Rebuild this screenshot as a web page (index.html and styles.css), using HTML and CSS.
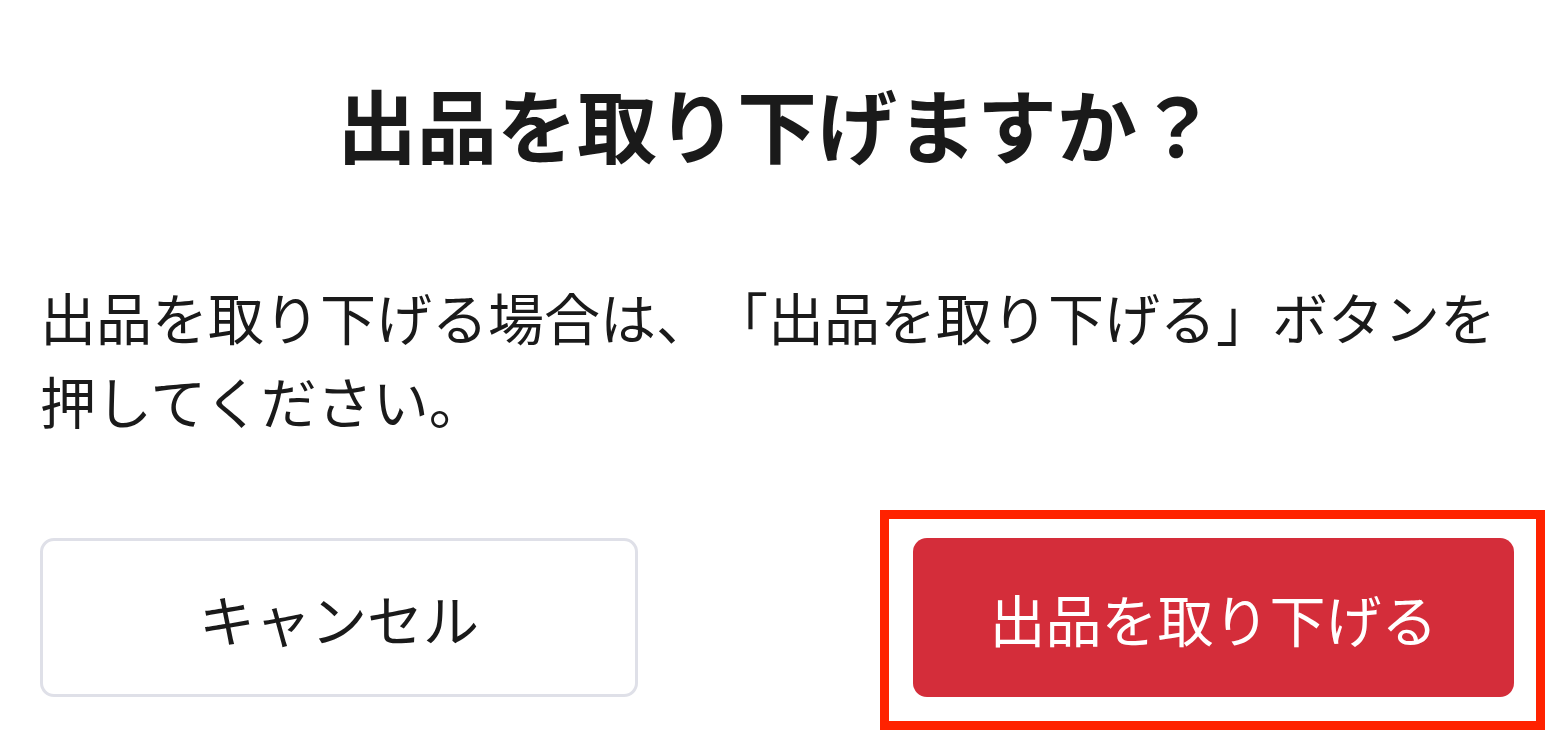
FILE: index.html
```html
<!DOCTYPE html>
<html lang="ja">
<head>
    <meta charset="UTF-8">
    <meta name="viewport" content="width=device-width, initial-scale=1.0">
    <title>出品を取り下げますか？</title>
    <link rel="stylesheet" href="styles.css">
</head>
<body>
    <div class="dialog">
        <h1 class="dialog-title">出品を取り下げますか？</h1>
        <p class="dialog-text">出品を取り下げる場合は、「出品を取り下げる」ボタンを押してください。</p>
        <div class="dialog-actions">
            <button class="btn btn-cancel">キャンセル</button>
            <div class="btn-wrap">
                <button class="btn btn-danger">出品を取り下げる</button>
                <span class="highlight"></span>
            </div>
        </div>
    </div>
</body>
</html>
```

FILE: styles.css
```css
body {
    margin: 0;
    background-color: #ffffff;
    font-family: "Noto Sans CJK JP", "Noto Sans", sans-serif;
    color: #1a1a1a;
    text-spacing-trim: space-all;
}
.dialog {
    padding: 62px 46px 37px 40px;
}
.dialog-title {
    margin: 0;
    font-size: 80px;
    font-weight: 700;
    line-height: 120px;
    text-align: center;
}
.dialog-text {
    margin: 92px 0 0 0;
    font-size: 56px;
    line-height: 84px;
}
.dialog-actions {
    display: flex;
    justify-content: space-between;
    margin-top: 96px;
}
.btn {
    height: 159px;
    font-family: inherit;
    font-size: 56px;
    border-radius: 14px;
    cursor: pointer;
}
.btn-cancel {
    width: 598px;
    background-color: #ffffff;
    border: 3px solid #dfe0e8;
    color: #1a1a1a;
}
.btn-wrap {
    position: relative;
}
.btn-danger {
    display: block;
    width: 601px;
    border: none;
    background-color: #d42d3a;
    color: #ffffff;
}
.highlight {
    position: absolute;
    top: -28px;
    left: -33px;
    right: -31px;
    bottom: -33px;
    border: 9px solid #ff2200;
    pointer-events: none;
}
```
